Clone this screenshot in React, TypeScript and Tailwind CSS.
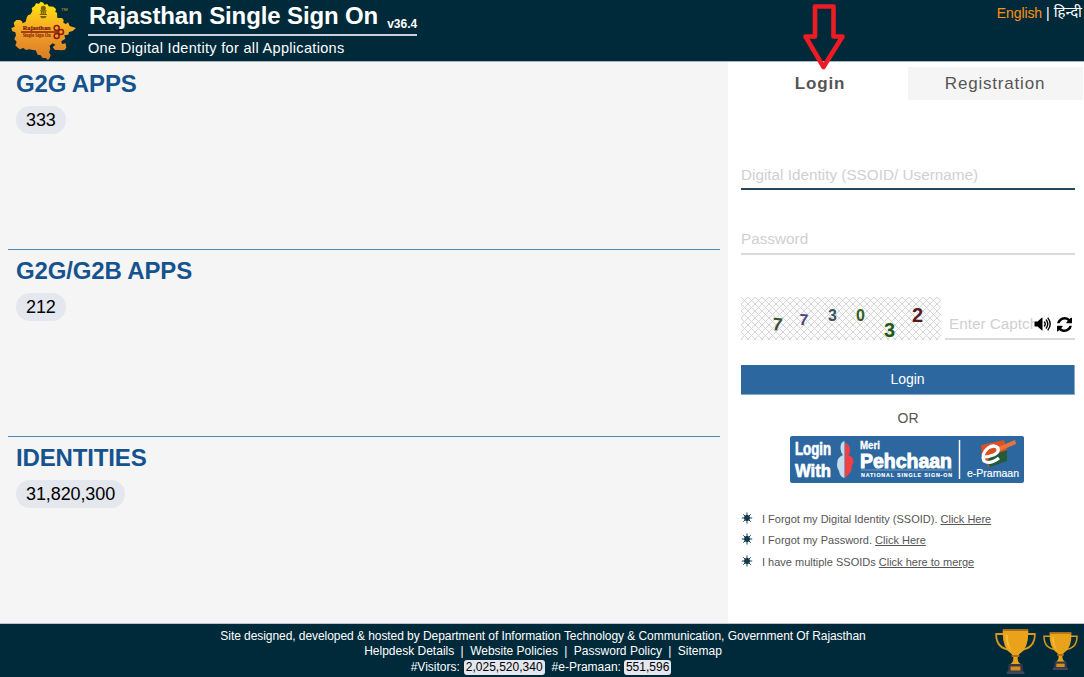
import React from "react";

const MapLogo = () => (
  <svg width="66" height="60" viewBox="33 3 198 180" className="block">
    <defs>
      <linearGradient id="gold" x1="0" y1="0" x2="0" y2="1">
        <stop offset="0" stopColor="#ffe60a" />
        <stop offset="0.3" stopColor="#fbbf1c" />
        <stop offset="0.6" stopColor="#ec9a28" />
        <stop offset="1" stopColor="#d97a25" />
      </linearGradient>
    </defs>
    <path
      fill="url(#gold)"
      d="M122 5L130 8L133 14L142 12L146 19L160 20L168 27L166 36L171 38L172 54L186 54L191 60L190 68L198 72L204 67L209 78L216 80L228 84L218 93L207 96L205 104L193 106L196 116L184 124L186 132L197 130L199 143L194 150L183 151L176 150L165 150L158 142L166 134L158 130L149 137L151 148L147 157L152 165L149 174L144 180L137 174L128 174L122 166L113 164L107 151L97 150L88 148L78 150L70 144L59 148L50 140L46 136L50 126L43 117L48 106L46 97L37 94L34 84L44 80L41 68L49 60L60 60L66 64L68 70L77 65L80 53L84 46L92 43L97 33L95 24L104 18L108 10L117 11Z"
    />
    <g fill="#7b610b">
      <circle cx="130" cy="25" r="7.500" />
      <path d="M120 31h20v3h-3l1 8h3v3h-22v-3h3l1-8h-3zM120 48h20l-4 7h-12z" />
    </g>
    <path d="M127 34v8M133 34v8" stroke="#fbd021" strokeWidth="1.500" />
    <g fill="none" stroke="#8a1c10" strokeWidth="4.600">
      <path d="M63 96h112" />
      <circle cx="170" cy="84" r="7.500" />
      <circle cx="170" cy="108" r="7.500" />
      <circle cx="183" cy="96" r="7.500" />
    </g>
    <g fill="#7c170e" fontFamily="Liberation Serif, serif" fontWeight="700">
      <text x="68" y="90" fontSize="21" stroke="#7c170e" strokeWidth=".6" textLength="84" lengthAdjust="spacingAndGlyphs">Rajasthan</text>
      <text x="68" y="111" fontSize="16" textLength="84" lengthAdjust="spacingAndGlyphs">Single Sign On</text>
    </g>
    <text x="184" y="33" fontSize="13" fill="#d8b41e" fontFamily="Liberation Sans, sans-serif">TM</text>
  </svg>
);

const Arrow = () => (
  <svg width="46" height="72" viewBox="0 0 46 72" className="absolute left-[801px] top-0 z-10">
    <path d="M14 6.5H32.500V36.500H41.500L22.500 67L4.500 36.500H14Z" fill="none" stroke="#ed1c24" strokeWidth="4.600" strokeLinejoin="round" />
  </svg>
);

const digits = [
  { c: "7", x: 31, y: 33, s: 18, f: "#3d5035", r: 5 },
  { c: "7", x: 58, y: 28, s: 16, f: "#4c4480", r: 3 },
  { c: "3", x: 87, y: 24, s: 16, f: "#365360", r: 0 },
  { c: "0", x: 115, y: 24, s: 16, f: "#315f24", r: 0 },
  { c: "3", x: 143, y: 40, s: 20, f: "#1d5a12", r: 0 },
  { c: "2", x: 171, y: 25, s: 20, f: "#5a1822", r: 0 },
];

const Captcha = () => (
  <svg width="200" height="43" viewBox="0 0 200 43" className="block shrink-0">
    <defs>
      <pattern id="lattice" width="7" height="7" patternUnits="userSpaceOnUse">
        <path d="M0 0L7 7M7 0L0 7" stroke="#d6d6d6" strokeWidth="1" />
      </pattern>
    </defs>
    <rect width="200" height="43" fill="#fbfbfb" />
    <rect width="200" height="43" fill="url(#lattice)" />
    {digits.map((d, i) => (
      <text key={i} x={d.x} y={d.y} fontSize={d.s} fill={d.f} fontWeight="700" fontFamily="Liberation Sans, sans-serif" transform={`rotate(${d.r} ${d.x} ${d.y})`}>
        {d.c}
      </text>
    ))}
  </svg>
);

const SpeakerIcon = () => (
  <svg width="18" height="16" viewBox="0 0 18 16" className="shrink-0">
    <path d="M.5 5.500H3.500L8 1.500Q8.500 1.200 8.500 2V14Q8.500 14.800 8 14.500L3.500 10.500H.5Z" fill="#000" />
    <path d="M10.500 6Q12 8 10.500 10M12.300 4Q15.200 8 12.300 12M14 2.200Q18.400 8 14 13.800" fill="none" stroke="#000" strokeWidth="1.400" strokeLinecap="round" />
  </svg>
);

const RefreshIcon = () => (
  <svg width="15" height="15" viewBox="0 128 1536 1536" className="ml-[5px] shrink-0">
    <path d="M1511 1056q0 5-1 7-64 268-268 434.500t-478 166.500q-146 0-282.500-55t-243.500-157l-129 129q-19 19-45 19t-45-19-19-45v-448q0-26 19-45t45-19h448q26 0 45 19t19 45-19 45l-137 137q71 66 161 102t187 36q134 0 250-65t186-179q11-17 53-117 8-23 30-23h192q13 0 22.500 9.500t9.500 22.500zm25-800v448q0 26-19 45t-45 19h-448q-26 0-45-19t-19-45 19-45l138-138q-148-137-349-137-134 0-250 65t-186 179q-11 17-53 117-8 23-30 23h-199q-13 0-22.500-9.500t-9.500-22.500v-7q65-268 270-434.500t480-166.500q146 0 284 55.500t245 156.500l130-129q19-19 45-19t45 19 19 45z" />
  </svg>
);

const Pehchaan = () => (
  <svg width="234" height="47" viewBox="0 0 234 47" className="block">
    <rect width="234" height="47" rx="2" fill="#2c689f" />
    <g fill="#fff" stroke="#fff" fontWeight="700" fontFamily="Liberation Sans Narrow, Liberation Sans, sans-serif">
      <text x="5" y="19" fontSize="19" strokeWidth=".7" textLength="36" lengthAdjust="spacingAndGlyphs">Login</text>
      <text x="5" y="40.500" fontSize="19" strokeWidth=".7" textLength="36" lengthAdjust="spacingAndGlyphs">With</text>
      <text x="70" y="12.500" fontSize="10" strokeWidth=".3" textLength="20" lengthAdjust="spacingAndGlyphs">Meri</text>
      <text x="70" y="31.500" fontSize="20" strokeWidth=".9" textLength="92" lengthAdjust="spacingAndGlyphs">Pehchaan</text>
      <text x="71" y="40.500" fontSize="5.300" strokeWidth=".15" textLength="91" lengthAdjust="spacing">NATIONAL SINGLE SIGN-ON</text>
    </g>
    <path d="M71 34H162" stroke="#91b3d0" strokeWidth=".7" />
    <path d="M54.500 5Q50 6 50.500 13Q51 17 53 19Q47 21 47 29Q47 32 49 35Q50 41 54.500 42Z" fill="#c5dcec" />
    <path d="M55 7Q60 8 60 14Q60 17 58.500 19Q64 21 63.500 27L62 29Q62 36 58 39L55 42Z" fill="#f13f43" />
    <path d="M169.500 4V43" stroke="#fff" strokeWidth="1.500" />
    <path d="M191 9L214 4L217 13L215 25L199 31L192 21Z" fill="#d95125" />
    <path d="M202 19L217 14L217 25L200 31L197 25Z" fill="#225b3a" />
    <path d="M206 12L225 4L226 8L207 16Z" fill="#ee7237" />
    <path d="M195 21Q210 19 208 12Q204 8 198 12Q191 18 194 25Q200 29 209 22" fill="none" stroke="#fff" strokeWidth="3.200" />
    <text x="177" y="41" fontSize="10.800" fill="#fff" stroke="#fff" strokeWidth=".15" textLength="52" lengthAdjust="spacingAndGlyphs" fontFamily="Liberation Sans, sans-serif">e-Pramaan</text>
  </svg>
);

const SunBullet = () => (
  <svg width="12" height="12" viewBox="0 0 12 12" className="relative -top-px mr-[9px] shrink-0">
    <circle cx="6" cy="6" r="2.900" fill="#06293b" />
    <path d="M6 .5V11.500M.8 6H11.200M2.300 2.300L9.700 9.700M9.700 2.300L2.300 9.700" stroke="#164055" strokeWidth="1" />
  </svg>
);

const Trophy = ({ w, h }: { w: number; h: number }) => (
  <svg width={w} height={h} viewBox="0 0 42 45" preserveAspectRatio="none" className="block shrink-0">
    <path d="M9 5H1.200Q1 20 17 21M33 5H40.800Q41 20 25 21" fill="none" stroke="#d7981b" strokeWidth="1.800" />
    <path d="M8 1H34Q35 19 25 25Q22 28 24 33L27 36H15L18 33Q20 28 17 25Q7 19 8 1Z" fill="#e8a31a" />
    <path d="M11 6H13Q13 17 18 23Q11 18 11 6Z" fill="#f7bd3d" />
    <path d="M8 0H34V2H8ZM17 26H25V28H17Z" fill="#a96e1b" />
    <path d="M14 35H28L29 44H13Z" fill="#34384a" />
    <rect x="16" y="37.500" width="10" height="4" fill="#d18e1b" />
    <path d="M12 42.500H30V45H12Z" fill="#42455a" />
  </svg>
);

const stats = [
  { title: "G2G APPS", count: "333" },
  { title: "G2G/G2B APPS", count: "212" },
  { title: "IDENTITIES", count: "31,820,300" },
];

const help = [
  { text: "I Forgot my Digital Identity (SSOID).", link: "Click Here" },
  { text: "I Forgot my Password.", link: "Click Here" },
  { text: "I have multiple SSOIDs", link: "Click here to merge" },
];

export default function App() {
  return (
    <div className="relative flex h-[677px] w-[1084px] flex-col overflow-hidden bg-white font-['Liberation_Sans',Arial,sans-serif]">
      <header className="flex h-[62px] shrink-0 justify-between border-b border-[#a9b5bd] bg-[#002a3a] text-white">
        <div className="flex">
          <div className="ml-[11px] mt-px">
            <MapLogo />
          </div>
          <div className="ml-[11px]">
            <div className="flex h-[36px] w-[329px] items-baseline border-b-2 border-[#c9d0dc] whitespace-nowrap">
              <h1 className="ml-px text-[24px] leading-[32px] font-bold tracking-[-0.12px]">Rajasthan Single Sign On</h1>
              <span className="relative top-[4px] ml-[9px] text-[12px] font-bold">v36.4</span>
            </div>
            <p className="mt-[2px] text-[14.5px] leading-[20px] tracking-[0.32px] whitespace-nowrap">One Digital Identity for all Applications</p>
          </div>
        </div>
        <div className="mr-[2px] mt-[3px] flex gap-1 text-[14px] leading-[20px]">
          <a className="tracking-[-0.1px] text-[#ff9110]">English</a>
          <span>|</span>
          <a className="relative top-px text-[15px] font-['Noto_Sans_Devanagari','Noto_Sans','Liberation_Sans',sans-serif]">हिन्दी</a>
        </div>
      </header>

      <Arrow />

      <main className="flex h-[561px] shrink-0">
        <section className="flex w-[728px] shrink-0 flex-col bg-[#f5f5f5] px-2 pt-px">
          {stats.map((s) => (
            <div key={s.title} className="h-[187px] shrink-0 border-b border-[#5189b5] px-2 pt-[7px] last:h-[186px] last:border-b-0">
              <h2 className="text-[24px] leading-[28px] font-bold tracking-[-0.15px] text-[#15538e]">{s.title}</h2>
              <span className="mt-2 inline-flex h-[28px] items-center rounded-full bg-[#e4e7ee] px-[10px] text-[18px] tracking-[-0.1px] text-black">{s.count}</span>
            </div>
          ))}
        </section>

        <section className="flex w-[356px] shrink-0 flex-col text-[#555]">
          <div className="flex h-[38px] items-end pl-1 pr-px text-[17px] tracking-[0.8px]">
            <div className="flex h-[33px] w-[176px] items-center justify-center font-bold">Login</div>
            <div className="flex h-[33px] flex-1 items-center justify-center bg-[#f5f5f5] pr-px">Registration</div>
          </div>
          <div className="flex w-[347px] flex-col pl-[13px]">
            <div className="mt-[62px] h-[28px] border-b-2 border-[#23485b] text-[15.3px] leading-[26px] text-[#d0d0d0]">Digital Identity (SSOID/ Username)</div>
            <div className="mt-[37px] h-[28px] border-b-2 border-[#dadada] text-[15.3px] leading-[23px] text-[#d0d0d0]">Password</div>
            <div className="mt-[42px] flex h-[43px] justify-between">
              <Captcha />
              <div className="flex w-[130px] items-center border-b-2 border-[#dadada] pl-1 pt-[13px]">
                <span className="w-[85px] overflow-hidden text-[15.3px] leading-[20px] whitespace-nowrap text-[#d0d0d0]">Enter Captcha</span>
                <SpeakerIcon />
                <RefreshIcon />
              </div>
            </div>
            <button className="mt-[25px] h-[30px] w-[334px] border-r border-b border-[#86a9c9] bg-[#2c689f] text-[14px] tracking-[-0.1px] text-white">Login</button>
            <div className="mt-[13px] text-center text-[14px] leading-5">OR</div>
            <div className="mt-[8px] flex pl-[49px]">
              <Pehchaan />
            </div>
            <ul className="mt-[25px] text-[11px]">
              {help.map((h) => (
                <li key={h.text} className="flex h-[21.5px] items-center whitespace-nowrap">
                  <SunBullet />
                  <span>
                    {h.text} <a className="underline underline-offset-1">{h.link}</a>
                  </span>
                </li>
              ))}
            </ul>
          </div>
        </section>
      </main>

      <footer className="flex h-[54px] shrink-0 border-t border-[#bcc2c8] bg-[#002a3a] text-white">
        <div className="flex flex-1 flex-col items-center pl-[91px] pt-[5px] text-[12px] leading-[15px] whitespace-nowrap">
          <p className="tracking-[-0.06px]">Site designed, developed &amp; hosted by Department of Information Technology &amp; Communication, Government Of Rajasthan</p>
          <p className="flex gap-[6.4px]">
            <a>Helpdesk Details</a><span>|</span><a>Website Policies</a><span>|</span><a>Password Policy</a><span>|</span><a>Sitemap</a>
          </p>
          <p className="mt-px mr-1 flex items-center">
            #Visitors:<span className="ml-1 rounded-[3px] bg-[#e4e7ee] px-[2px] text-black">2,025,520,340</span>
            <span className="ml-[7px]">#e-Pramaan:</span>
            <span className="ml-[3px] rounded-[3px] bg-[#e4e7ee] px-[2px] text-black">551,596</span>
          </p>
        </div>
        <div className="flex w-[89px] items-start gap-[7px] pt-[5px]">
          <Trophy w={41} h={45} />
          <div className="pt-[3px]">
            <Trophy w={35} h={38} />
          </div>
        </div>
      </footer>
    </div>
  );
}
